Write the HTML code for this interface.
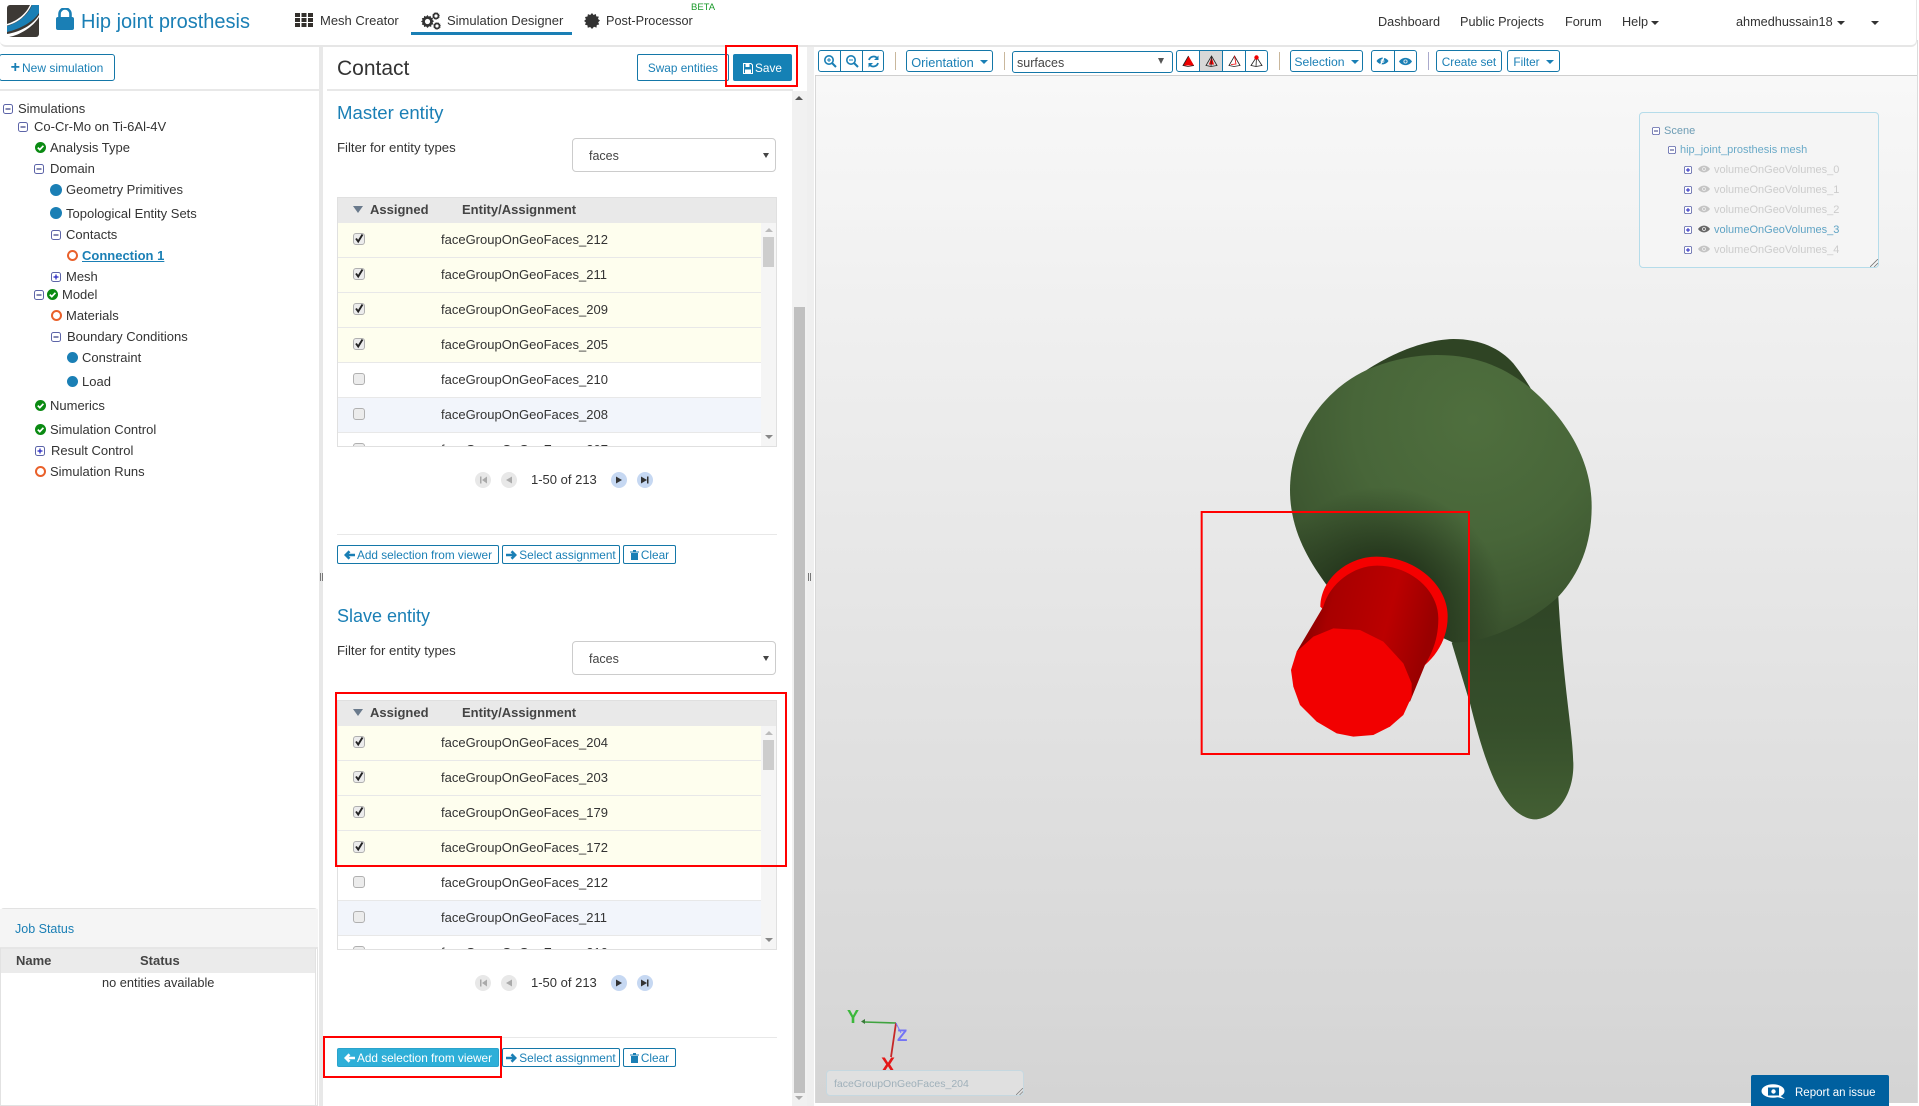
<!DOCTYPE html>
<html><head><meta charset="utf-8"><title>Contact</title>
<style>
html,body{margin:0;padding:0;background:#fff}
body{width:1919px;height:1106px;position:relative;overflow:hidden;font-family:"Liberation Sans",sans-serif;font-size:13px;color:#333}
.a{position:absolute}
.t{position:absolute;white-space:nowrap;line-height:0;transform:translateY(1px)}
.blue{color:#1a7fb5}
.btn{position:absolute;box-sizing:border-box;border:1px solid #1477a8;border-radius:2px;color:#1a7fb5;background:#fff;font-size:11.8px;white-space:nowrap;display:flex;align-items:center;justify-content:center;padding-top:1px}
.sel{position:absolute;left:572px;top:138px;width:204px;height:34px;box-sizing:border-box;border:1px solid #ccc;border-radius:4px;background:#fff}
.th{position:absolute;left:337px;top:197px;width:440px;height:26px;box-sizing:border-box;background:#e9e9e9;border:1px solid #e0e0e0;border-bottom:0}
.body{position:absolute;left:337px;top:223px;width:440px;height:224px;box-sizing:border-box;border:1px solid #e0e0e0;border-top:0;overflow:hidden;background:#fff}
.r{position:relative;width:423px;height:35px;box-sizing:border-box;border-bottom:1px solid #e8e8e8;background:#fff}
.r.y{background:#fefeee}
.r.b{background:#f2f5fb}
.r span{position:absolute;left:103px;top:17px;line-height:0;white-space:nowrap;font-size:13px;color:#333}
.cb{position:absolute;left:15px;top:10px;width:12px;height:12px;box-sizing:border-box;border:1px solid #b0b0b0;border-radius:3px;background:#ececec}
.cb svg{position:absolute;left:-1px;top:-2px}
.sb{position:absolute;left:423px;top:0;width:15px;height:223px;background:#f5f5f5}
.sb i{position:absolute;left:2px;top:14px;width:11px;height:30px;background:#cdcdcd}
.up{position:absolute;width:0;height:0;border-left:4px solid transparent;border-right:4px solid transparent;border-bottom:4px solid #bbb}
.dn{position:absolute;width:0;height:0;border-left:4px solid transparent;border-right:4px solid transparent;border-top:4px solid #888}
.pg{position:absolute;width:16px;height:16px;border-radius:50%;background:#e8e8e8}
.pg.on{background:#c6d8f2}
.hr{position:absolute;height:1px;background:#e8e8e8}
.rect{position:absolute;box-sizing:border-box;border:2px solid #f00;z-index:20}
.sep{position:absolute;width:1px;top:52px;height:18px;background:#c9b79c}
.tbar{position:absolute;box-sizing:border-box;border:1px solid #1477a8;border-radius:3px;background:#fff;top:50px;height:22px;display:flex;align-items:center;color:#1a7fb5;font-size:11.8px}
.tbar.tx{padding-top:2px}
.tbar b{font-weight:normal;display:flex;align-items:center;justify-content:center;height:100%;box-sizing:border-box;border-right:1px solid #1477a8}
.tbar b:last-child{border-right:0}
.car{display:inline-block;width:0;height:0;border-left:4px solid transparent;border-right:4px solid transparent;border-top:4px solid currentColor;margin-left:6px;vertical-align:middle}
.grip{position:absolute;top:573px;width:3px;height:8px;border-left:1px solid #777;border-right:1px solid #777;box-sizing:border-box}
</style></head>
<body>
<svg width="0" height="0" style="position:absolute">
<defs>
<symbol id="minus" viewBox="0 0 10 10"><rect x=".5" y=".5" width="9" height="9" rx="2" fill="#fff" stroke="#5c64a8"/><path d="M2.500 5H7.500" stroke="#333a80" stroke-width="1.200"/></symbol>
<symbol id="plus" viewBox="0 0 10 10"><rect x=".5" y=".5" width="9" height="9" rx="2" fill="#fff" stroke="#5c64a8"/><path d="M2.500 5H7.500M5 2.500V7.500" stroke="#2222c0" stroke-width="1.200"/></symbol>
<symbol id="ok" viewBox="0 0 11 11"><circle cx="5.500" cy="5.500" r="5.500" fill="#0a8a12"/><path d="M2.800 5.600L4.800 7.600L8.400 3.800" fill="none" stroke="#fff" stroke-width="1.700"/></symbol>
<symbol id="tick" viewBox="0 0 12 12"><path d="M3 6.500L5.200 9.500L9.500 2.500" fill="none" stroke="#222" stroke-width="1.900"/></symbol>
<symbol id="eye" viewBox="0 0 12 8"><path d="M0 4C3 -.5 9 -.5 12 4C9 8.500 3 8.500 0 4Z" fill="currentColor"/><circle cx="6" cy="4" r="1.900" fill="#f0f0f0"/><circle cx="6" cy="4" r="1.100" fill="currentColor"/></symbol>
<symbol id="gear" viewBox="0 0 16 16"><path d="M8 0L9.500 2L11.800 1L12.300 3.400L14.800 3.600L14 6L16 7.500L14.200 9.200L15.200 11.500L12.800 12L12.500 14.600L10 13.800L8 16L6.200 14L3.800 14.800L3.400 12.300L1 11.800L1.900 9.400L0 8L1.900 6.400L1 4L3.500 3.500L3.900 1.100L6.200 2Z" fill="#333"/></symbol>
<symbol id="gearh" viewBox="0 0 16 16"><path d="M8 0L9.500 2L11.800 1L12.300 3.400L14.800 3.600L14 6L16 7.500L14.200 9.200L15.200 11.500L12.800 12L12.500 14.600L10 13.800L8 16L6.200 14L3.800 14.800L3.400 12.300L1 11.800L1.900 9.400L0 8L1.900 6.400L1 4L3.500 3.500L3.900 1.100L6.200 2Z" fill="#333"/><circle cx="8" cy="8" r="3.200" fill="#fff"/></symbol>
</defs>
</svg>

<!-- header -->
<svg class="a" style="left:7px;top:5px" width="32" height="32" viewBox="0 0 32 32"><rect width="32" height="32" rx="3" fill="#3d3935"/><path d="M0 21C11 18 21 10 25 0H32V8C26 17 13 24 0 27Z" fill="#1a7fb5"/><path d="M0 29C13 27 26 20 32 10V12C26 22 13 30 2 32H0Z" fill="#fff"/><path d="M0 19C10 16 19 9 23 0H24.500C20 10 11 18 0 20.500Z" fill="#fff"/></svg>
<svg class="a" style="left:56px;top:8px" width="18" height="22" viewBox="0 0 18 22"><path d="M3.500 9V6a5.500 5.500 0 0 1 11 0V9" fill="none" stroke="#1a7fb5" stroke-width="2.600"/><rect x="0" y="9" width="18" height="13" rx="2" fill="#1a7fb5"/></svg>
<div class="t blue" style="left:81px;top:21px;font-size:20px">Hip joint prosthesis</div>
<svg class="a" style="left:295px;top:13px" width="18" height="14" viewBox="0 0 18 14"><g fill="#33302c"><rect x="0" y="0" width="5" height="4"/><rect x="6.500" y="0" width="5" height="4"/><rect x="13" y="0" width="5" height="4"/><rect x="0" y="5" width="5" height="4"/><rect x="6.500" y="5" width="5" height="4"/><rect x="13" y="5" width="5" height="4"/><rect x="0" y="10" width="5" height="4"/><rect x="6.500" y="10" width="5" height="4"/><rect x="13" y="10" width="5" height="4"/></g></svg>
<div class="t" style="left:320px;top:20px;font-size:13px">Mesh Creator</div>
<svg class="a" style="left:421px;top:15px" width="13" height="13"><use href="#gearh"/></svg>
<svg class="a" style="left:432px;top:12px" width="8" height="8"><use href="#gearh"/></svg>
<svg class="a" style="left:433px;top:22px" width="8" height="8"><use href="#gearh"/></svg>
<div class="t" style="left:447px;top:20px;font-size:13px">Simulation Designer</div>
<div class="a" style="left:411px;top:32px;width:161px;height:3px;background:#1a7fb5"></div>
<svg class="a" style="left:584px;top:13px" width="16" height="16"><use href="#gear"/></svg>
<div class="t" style="left:606px;top:20px;font-size:12.700px">Post-Processor</div>
<div class="t" style="left:691px;top:7px;font-size:9.500px;color:#1a9a2a">BETA</div>
<div class="t" style="left:1378px;top:21px;font-size:12.700px">Dashboard</div>
<div class="t" style="left:1460px;top:21px;font-size:12.700px">Public Projects</div>
<div class="t" style="left:1565px;top:21px;font-size:12.700px">Forum</div>
<div class="t" style="left:1622px;top:21px;font-size:12.700px">Help</div>
<div class="dn" style="left:1651px;top:21px;border-top-color:#333"></div>
<div class="t" style="left:1736px;top:21px;font-size:12.700px">ahmedhussain18</div>
<div class="dn" style="left:1837px;top:21px;border-top-color:#333"></div>
<div class="dn" style="left:1871px;top:21px;border-top-color:#333"></div>
<div class="a" style="left:0;top:0;width:1917px;height:47px;box-sizing:border-box;border-bottom:2px solid #e6e6e6;border-right:1px solid #e6e6e6;border-radius:0 0 6px 6px"></div>

<!-- left panel -->
<div class="btn" style="left:-1px;top:54px;width:116px;height:27px;font-size:12px;color:#1a7fb5;border-radius:3px;padding-top:0"><span style="font-weight:bold;font-size:16px;margin-right:2px">+</span>New simulation</div>
<div class="hr" style="left:0;top:89px;width:319px;height:2px"></div>
<div class="a" style="left:319px;top:47px;width:4px;height:1059px;background:#e8e8e8"></div>
<div class="grip" style="left:320px"></div>

<svg class="a" style="left:3px;top:104px" width="10" height="10"><use href="#minus"/></svg>
<div class="t" style="left:18px;top:108px">Simulations</div>
<svg class="a" style="left:18px;top:122px" width="10" height="10"><use href="#minus"/></svg>
<div class="t" style="left:34px;top:126px">Co-Cr-Mo on Ti-6Al-4V</div>
<svg class="a" style="left:35px;top:142px" width="11" height="11"><use href="#ok"/></svg>
<div class="t" style="left:50px;top:147px">Analysis Type</div>
<svg class="a" style="left:34px;top:164px" width="10" height="10"><use href="#minus"/></svg>
<div class="t" style="left:50px;top:168px">Domain</div>
<div class="a" style="left:50px;top:184px;width:12px;height:12px;border-radius:50%;background:#1a7fb5"></div>
<div class="t" style="left:66px;top:189px">Geometry Primitives</div>
<div class="a" style="left:50px;top:207px;width:12px;height:12px;border-radius:50%;background:#1a7fb5"></div>
<div class="t" style="left:66px;top:213px">Topological Entity Sets</div>
<svg class="a" style="left:51px;top:230px" width="10" height="10"><use href="#minus"/></svg>
<div class="t" style="left:66px;top:234px">Contacts</div>
<div class="a" style="left:67px;top:250px;width:11px;height:11px;box-sizing:border-box;border:2px solid #e9602a;border-radius:50%"></div>
<div class="t" style="left:82px;top:255px;font-weight:bold;color:#1a7fb5;text-decoration:underline">Connection 1</div>
<svg class="a" style="left:51px;top:272px" width="10" height="10"><use href="#plus"/></svg>
<div class="t" style="left:66px;top:276px">Mesh</div>
<svg class="a" style="left:34px;top:290px" width="10" height="10"><use href="#minus"/></svg>
<svg class="a" style="left:47px;top:289px" width="11" height="11"><use href="#ok"/></svg>
<div class="t" style="left:62px;top:294px">Model</div>
<div class="a" style="left:51px;top:310px;width:11px;height:11px;box-sizing:border-box;border:2px solid #e9602a;border-radius:50%"></div>
<div class="t" style="left:66px;top:315px">Materials</div>
<svg class="a" style="left:51px;top:332px" width="10" height="10"><use href="#minus"/></svg>
<div class="t" style="left:67px;top:336px">Boundary Conditions</div>
<div class="a" style="left:67px;top:352px;width:11px;height:11px;border-radius:50%;background:#1a7fb5"></div>
<div class="t" style="left:82px;top:357px">Constraint</div>
<div class="a" style="left:67px;top:376px;width:11px;height:11px;border-radius:50%;background:#1a7fb5"></div>
<div class="t" style="left:82px;top:381px">Load</div>
<svg class="a" style="left:35px;top:400px" width="11" height="11"><use href="#ok"/></svg>
<div class="t" style="left:50px;top:405px">Numerics</div>
<svg class="a" style="left:35px;top:424px" width="11" height="11"><use href="#ok"/></svg>
<div class="t" style="left:50px;top:429px">Simulation Control</div>
<svg class="a" style="left:35px;top:446px" width="10" height="10"><use href="#plus"/></svg>
<div class="t" style="left:51px;top:450px">Result Control</div>
<div class="a" style="left:35px;top:466px;width:11px;height:11px;box-sizing:border-box;border:2px solid #e9602a;border-radius:50%"></div>
<div class="t" style="left:50px;top:471px">Simulation Runs</div>

<!-- job status -->
<div class="a" style="left:0;top:908px;width:318px;height:198px;box-sizing:border-box;border:1px solid #e2e2e2;border-radius:4px 4px 0 0;background:#fff"></div>
<div class="a" style="left:0;top:909px;width:318px;height:38px;background:#f5f5f5;border-bottom:2px solid #e6e6e6"></div>
<div class="t blue" style="left:15px;top:928px;font-size:12.500px">Job Status</div>
<div class="a" style="left:1px;top:949px;width:314px;height:24px;background:#ebebeb"></div>
<div class="t" style="left:16px;top:960px;font-weight:bold;color:#444">Name</div>
<div class="t" style="left:140px;top:960px;font-weight:bold;color:#444">Status</div>
<div class="t" style="left:102px;top:982px;font-size:12.800px">no entities available</div>
<div class="a" style="left:315px;top:948px;width:1px;height:158px;background:#e2e2e2"></div>
<div class="a" style="left:0;top:948px;width:1px;height:158px;background:#e2e2e2"></div>
<div class="a" style="left:0;top:1105px;width:316px;height:1px;background:#e2e2e2"></div>

<!-- contact header -->
<div class="t" style="left:337px;top:68px;font-size:21px;color:#333">Contact</div>
<div class="btn" style="left:637px;top:54px;width:92px;height:27px">Swap entities</div>
<div class="btn" style="left:733px;top:54px;width:59px;height:27px;background:#1581b5;color:#fff;border-color:#1581b5">
<svg width="10" height="11" viewBox="0 0 10 11" style="margin-right:2px"><path d="M.5 .5H8L9.500 2V10.500H.5Z" fill="none" stroke="#fff"/><rect x="2.500" y="1" width="4" height="3" fill="#fff"/><rect x="2" y="6.500" width="6" height="3.500" fill="#fff"/></svg>Save</div>
<div class="rect" style="left:725px;top:45px;width:73px;height:42px"></div>
<div class="hr" style="left:327px;top:89px;width:466px;height:2px"></div>

<!-- scrollbars -->
<div class="a" style="left:792px;top:91px;width:15px;height:1015px;background:#f1f1f1"></div>
<div class="a" style="left:794px;top:307px;width:11px;height:786px;background:#c0c0c0"></div>
<div class="up" style="left:795px;top:96px;border-bottom-color:#555"></div>
<div class="dn" style="left:795px;top:1096px;border-top-color:#aaa"></div>
<div class="a" style="left:807px;top:47px;width:7px;height:1059px;background:#efefef"></div>
<div class="grip" style="left:808px"></div>

<!-- master section -->
<div class="t blue" style="left:337px;top:112px;font-size:18.600px">Master entity</div>
<div class="t" style="left:337px;top:147px;font-size:13.200px">Filter for entity types</div>
<div class="sel"></div>
<div class="t" style="left:589px;top:155px;font-size:12.500px;color:#444">faces</div>
<div class="dn" style="left:763px;top:153px;border-left-width:3px;border-right-width:3px;border-top:5px solid #444"></div>
<div class="th"></div>
<div class="dn" style="left:353px;top:206px;border-left-width:5px;border-right-width:5px;border-top:7px solid #6a7a8c"></div>
<div class="t" style="left:370px;top:209px;font-weight:bold;color:#444">Assigned</div>
<div class="t" style="left:462px;top:209px;font-weight:bold;color:#444">Entity/Assignment</div>
<div class="body">
<div class="r y"><div class="cb"><svg width="12" height="12"><use href="#tick"/></svg></div><span>faceGroupOnGeoFaces_212</span></div>
<div class="r y"><div class="cb"><svg width="12" height="12"><use href="#tick"/></svg></div><span>faceGroupOnGeoFaces_211</span></div>
<div class="r y"><div class="cb"><svg width="12" height="12"><use href="#tick"/></svg></div><span>faceGroupOnGeoFaces_209</span></div>
<div class="r y"><div class="cb"><svg width="12" height="12"><use href="#tick"/></svg></div><span>faceGroupOnGeoFaces_205</span></div>
<div class="r"><div class="cb"></div><span>faceGroupOnGeoFaces_210</span></div>
<div class="r b"><div class="cb"></div><span>faceGroupOnGeoFaces_208</span></div>
<div class="r"><div class="cb"></div><span>faceGroupOnGeoFaces_207</span></div>
<div class="sb"><i></i><div class="up" style="left:4px;top:5px"></div><div class="dn" style="left:4px;top:212px"></div></div>
</div>
<div class="pg" style="left:475px;top:472px"></div><div class="pg" style="left:501px;top:472px"></div><div class="pg on" style="left:611px;top:472px"></div><div class="pg on" style="left:637px;top:472px"></div>
<svg class="a" style="left:475px;top:472px" width="186" height="16" viewBox="0 0 186 16"><path d="M5 4.500H6.500V11.500H5ZM12 4.500V11.500L7 8Z" fill="#aaa"/><path d="M37 4.500V11.500L31 8Z" fill="#aaa"/><path d="M141 4.500V11.500L147 8Z" fill="#333"/><path d="M166 4.500V11.500L172 8ZM172 4.500H173.500V11.500H172Z" fill="#333"/></svg>
<div class="t" style="left:531px;top:479px;font-size:13px">1-50 of 213</div>
<div class="hr" style="left:337px;top:534px;width:440px"></div>
<div class="btn" style="left:337px;top:545px;width:162px;height:19px"><svg width="11" height="10" viewBox="0 0 12 10" style="margin-right:2px"><path d="M0 5L5 0L7 2L5.200 3.600H12V6.400H5.200L7 8L5 10Z" fill="#1a7fb5"/></svg>Add selection from viewer</div>
<div class="btn" style="left:502px;top:545px;width:118px;height:19px"><svg width="11" height="10" viewBox="0 0 12 10" style="margin-right:2px"><path d="M12 5L7 0L5 2L6.800 3.600H0V6.400H6.800L5 8L7 10Z" fill="#1a7fb5"/></svg>Select assignment</div>
<div class="btn" style="left:623px;top:545px;width:53px;height:19px"><svg width="9" height="10" viewBox="0 0 9 10" style="margin-right:2px"><path d="M0 1.500H9V2.500H0ZM3 0H6V1.500H3ZM1 3H8V10H1Z" fill="#1a7fb5"/></svg>Clear</div>

<!-- slave section -->
<div class="t blue" style="left:337px;top:615px;font-size:18px">Slave entity</div>
<div class="t" style="left:337px;top:650px;font-size:13.200px">Filter for entity types</div>
<div class="sel" style="top:641px"></div>
<div class="t" style="left:589px;top:658px;font-size:12.500px;color:#444">faces</div>
<div class="dn" style="left:763px;top:656px;border-left-width:3px;border-right-width:3px;border-top:5px solid #444"></div>
<div class="th" style="top:700px"></div>
<div class="dn" style="left:353px;top:709px;border-left-width:5px;border-right-width:5px;border-top:7px solid #6a7a8c"></div>
<div class="t" style="left:370px;top:712px;font-weight:bold;color:#444">Assigned</div>
<div class="t" style="left:462px;top:712px;font-weight:bold;color:#444">Entity/Assignment</div>
<div class="body" style="top:726px">
<div class="r y"><div class="cb"><svg width="12" height="12"><use href="#tick"/></svg></div><span>faceGroupOnGeoFaces_204</span></div>
<div class="r y"><div class="cb"><svg width="12" height="12"><use href="#tick"/></svg></div><span>faceGroupOnGeoFaces_203</span></div>
<div class="r y"><div class="cb"><svg width="12" height="12"><use href="#tick"/></svg></div><span>faceGroupOnGeoFaces_179</span></div>
<div class="r y"><div class="cb"><svg width="12" height="12"><use href="#tick"/></svg></div><span>faceGroupOnGeoFaces_172</span></div>
<div class="r"><div class="cb"></div><span>faceGroupOnGeoFaces_212</span></div>
<div class="r b"><div class="cb"></div><span>faceGroupOnGeoFaces_211</span></div>
<div class="r"><div class="cb"></div><span>faceGroupOnGeoFaces_210</span></div>
<div class="sb"><i></i><div class="up" style="left:4px;top:5px"></div><div class="dn" style="left:4px;top:212px"></div></div>
</div>
<div class="pg" style="left:475px;top:975px"></div><div class="pg" style="left:501px;top:975px"></div><div class="pg on" style="left:611px;top:975px"></div><div class="pg on" style="left:637px;top:975px"></div>
<svg class="a" style="left:475px;top:975px" width="186" height="16" viewBox="0 0 186 16"><path d="M5 4.500H6.500V11.500H5ZM12 4.500V11.500L7 8Z" fill="#aaa"/><path d="M37 4.500V11.500L31 8Z" fill="#aaa"/><path d="M141 4.500V11.500L147 8Z" fill="#333"/><path d="M166 4.500V11.500L172 8ZM172 4.500H173.500V11.500H172Z" fill="#333"/></svg>
<div class="t" style="left:531px;top:982px;font-size:13px">1-50 of 213</div>
<div class="hr" style="left:337px;top:1037px;width:440px"></div>
<div class="btn" style="left:337px;top:1048px;width:162px;height:19px;background:#2eafd8;color:#fff;border-color:#2aa3cc"><svg width="11" height="10" viewBox="0 0 12 10" style="margin-right:2px"><path d="M0 5L5 0L7 2L5.200 3.600H12V6.400H5.200L7 8L5 10Z" fill="#fff"/></svg>Add selection from viewer</div>
<div class="btn" style="left:502px;top:1048px;width:118px;height:19px"><svg width="11" height="10" viewBox="0 0 12 10" style="margin-right:2px"><path d="M12 5L7 0L5 2L6.800 3.600H0V6.400H6.800L5 8L7 10Z" fill="#1a7fb5"/></svg>Select assignment</div>
<div class="btn" style="left:623px;top:1048px;width:53px;height:19px"><svg width="9" height="10" viewBox="0 0 9 10" style="margin-right:2px"><path d="M0 1.500H9V2.500H0ZM3 0H6V1.500H3ZM1 3H8V10H1Z" fill="#1a7fb5"/></svg>Clear</div>
<div class="rect" style="left:335px;top:692px;width:452px;height:175px"></div>
<div class="rect" style="left:323px;top:1036px;width:179px;height:42px"></div>

<!-- toolbar -->
<div class="a" style="left:815px;top:47px;width:1102px;height:28px;background:#fff"></div>
<div class="tbar" style="left:818px;width:66px">
<b style="width:22px"><svg width="14" height="14" viewBox="0 0 14 14"><circle cx="6" cy="6" r="4.200" fill="none" stroke="#1a7fb5" stroke-width="1.600"/><path d="M9 9L13 13" stroke="#1a7fb5" stroke-width="2"/><path d="M4 6H8M6 4V8" stroke="#1a7fb5"/></svg></b>
<b style="width:22px"><svg width="14" height="14" viewBox="0 0 14 14"><circle cx="6" cy="6" r="4.200" fill="none" stroke="#1a7fb5" stroke-width="1.600"/><path d="M9 9L13 13" stroke="#1a7fb5" stroke-width="2"/><path d="M4 6H8" stroke="#1a7fb5"/></svg></b>
<b style="width:20px"><svg width="13" height="13" viewBox="0 0 13 13"><path d="M2 5A4.800 4.800 0 0 1 10.500 3.500M11 8A4.800 4.800 0 0 1 2.500 9.500" fill="none" stroke="#1a7fb5" stroke-width="1.800"/><path d="M11.500 .5V5H7ZM1.500 12.500V8H6Z" fill="#1a7fb5"/></svg></b>
</div>
<div class="sep" style="left:895px"></div>
<div class="tbar tx" style="left:906px;width:87px;justify-content:center;font-size:12.800px">Orientation<span class="car"></span></div>
<div class="sep" style="left:1004px"></div>
<div class="tbar tx" style="left:1012px;top:51px;width:161px;color:#444;font-size:12.500px;padding-left:4px">surfaces</div>
<div class="dn" style="left:1158px;top:58px;border-left-width:3px;border-right-width:3px;border-top:6px solid #555"></div>
<div class="tbar" style="left:1176px;width:92px">
<b style="width:23px"><svg width="13" height="12" viewBox="0 0 13 12"><path d="M6.500 1L12 10.500H1Z" fill="#e00"/><path d="M6.500 1L1 10.500L6 11.500L12 10.500" fill="none" stroke="#222" stroke-width=".8"/></svg></b>
<b style="width:23px;background:#d8d8d8"><svg width="13" height="12" viewBox="0 0 13 12"><path d="M6.500 2L9 9.500L4 9.500Z" fill="#e00"/><path d="M6.500 1L12 10.500L6 11.500L1 10.500ZM6.500 1L6 11.500" fill="none" stroke="#222" stroke-width=".8"/></svg></b>
<b style="width:23px"><svg width="13" height="12" viewBox="0 0 13 12"><path d="M6.500 1L12 10.500L6 11.500L1 10.500Z" fill="none" stroke="#222" stroke-width=".8"/><path d="M6.500 1L8 9L3 9.500" fill="none" stroke="#e00" stroke-width=".8"/></svg></b>
<b style="width:21px"><svg width="13" height="12" viewBox="0 0 13 12"><path d="M6.500 2L12 10.500L6 11.500L1 10.500ZM6.500 2L6 11.500" fill="none" stroke="#222" stroke-width=".8"/><circle cx="6.500" cy="2.500" r="2.200" fill="#e00"/></svg></b>
</div>
<div class="sep" style="left:1279px"></div>
<div class="tbar tx" style="left:1290px;width:73px;justify-content:center;font-size:12.200px">Selection<span class="car"></span></div>
<div class="tbar" style="left:1371px;width:46px">
<b style="width:23px"><svg width="13" height="10" viewBox="0 0 13 10" style="color:#1a7fb5"><use href="#eye" x="0" y="1" width="13" height="8"/><path d="M8.500 0L4 10" stroke="#fff" stroke-width="1.400"/></svg></b>
<b style="width:22px"><svg width="13" height="9" viewBox="0 0 12 8" style="color:#1a7fb5"><use href="#eye"/></svg></b>
</div>
<div class="sep" style="left:1428px;background:#aac"></div>
<div class="tbar tx" style="left:1436px;width:66px;justify-content:center">Create set</div>
<div class="tbar tx" style="left:1507px;width:53px;justify-content:center">Filter<span class="car"></span></div>
<div class="a" style="left:815px;top:75px;width:1102px;height:1px;background:#cfcfcf"></div>

<!-- viewer -->
<div class="a" style="left:815px;top:76px;width:1102px;height:1027px;background:linear-gradient(#f8f8f8,#d4d4d4);border-left:1px solid #d8d8d8;box-sizing:border-box"></div>
<div class="a" style="left:1917px;top:40px;width:1px;height:1063px;background:#dcdcdc"></div>

<svg class="a" style="left:1180px;top:320px;z-index:5" width="440" height="520" viewBox="0 0 1320 1560">
<defs>
<radialGradient id="ball" gradientUnits="userSpaceOnUse" cx="880" cy="300" r="800"><stop offset="0" stop-color="#4f6f3e"/><stop offset=".45" stop-color="#486639"/><stop offset=".72" stop-color="#3e5831"/><stop offset="1" stop-color="#2f4225"/></radialGradient>
<radialGradient id="neck" gradientUnits="userSpaceOnUse" cx="610" cy="860" r="360"><stop offset=".45" stop-color="#1f2f18" stop-opacity=".75"/><stop offset="1" stop-color="#1f2f18" stop-opacity="0"/></radialGradient>
<linearGradient id="leg" x1="0" y1="0" x2="0" y2="1"><stop offset="0" stop-color="#2f4526"/><stop offset=".6" stop-color="#364f2b"/><stop offset="1" stop-color="#435f33"/></linearGradient>
<linearGradient id="cyl" x1="0" y1="0" x2="1" y2=".25"><stop offset="0" stop-color="#6a0000"/><stop offset=".3" stop-color="#a80000"/><stop offset=".7" stop-color="#bb0000"/><stop offset="1" stop-color="#990000"/></linearGradient>
</defs>
<path d="M560 150C620 110 720 60 820 57C900 57 960 85 1000 130C1020 155 1040 185 1052 205L800 180Z" fill="#2f4424"/>
<path d="M815 968L870 1150C900 1270 935 1390 985 1450C1015 1488 1050 1500 1070 1498C1135 1490 1182 1420 1180 1330C1178 1230 1150 1100 1135 830L1000 900Z" fill="url(#leg)"/>
<path id="bp" d="M770 105C690 105 620 125 560 150C430 210 330 350 330 510C330 630 385 720 440 795L820 968C930 968 1060 900 1135 830C1200 760 1235 670 1235 560C1235 410 1150 290 1052 205C960 130 870 105 770 105Z" fill="url(#ball)"/>
<path d="M770 105C690 105 620 125 560 150C430 210 330 350 330 510C330 630 385 720 440 795L820 968C930 968 1060 900 1135 830C1200 760 1235 670 1235 560C1235 410 1150 290 1052 205C960 130 870 105 770 105Z" fill="url(#neck)"/>
<path d="M590 710C700 710 803 790 803 890C803 950 775 1000 735 1035L600 1050L421 860C421 780 500 710 590 710Z" fill="#f50000"/>
<path d="M592 737C690 737 775 810 775 895C775 960 755 1000 735 1035L690 1145L350 995L430 860C450 790 520 737 592 737Z" fill="url(#cyl)"/>
<path d="M333 1050L350 995L400 950L460 925L540 930L610 965L670 1030L695 1090L695 1130L670 1185L630 1220L580 1245L520 1250L470 1240L410 1205L360 1155L340 1100Z" fill="#f20000"/>
<rect x="65" y="576" width="802" height="726" fill="none" stroke="#f00" stroke-width="6"/>
</svg>

<!-- scene panel -->
<div class="a" style="left:1639px;top:112px;width:240px;height:156px;box-sizing:border-box;border:1px solid #b5dcea;border-radius:4px;background:#f5f5f5"></div>
<svg class="a" style="left:1870px;top:259px" width="8" height="8" viewBox="0 0 8 8"><path d="M0 8L8 0M4 8L8 4" stroke="#777" stroke-width=".8"/></svg>
<svg class="a" style="left:1652px;top:127px" width="8" height="8" viewBox="0 0 10 10"><use href="#minus"/></svg>
<div class="t" style="left:1664px;top:130px;font-size:11px;color:#6d9cb4">Scene</div>
<svg class="a" style="left:1668px;top:146px" width="8" height="8" viewBox="0 0 10 10"><use href="#minus"/></svg>
<div class="t" style="left:1680px;top:149px;font-size:11px;color:#6aaac8">hip_joint_prosthesis mesh</div>
<svg class="a" style="left:1684px;top:166px" width="8" height="8" viewBox="0 0 10 10"><use href="#plus"/></svg><svg class="a" style="left:1698px;top:165px;color:#c4c4c4" width="12" height="8"><use href="#eye"/></svg>
<div class="t" style="left:1714px;top:169px;font-size:11px;color:#ccc">volumeOnGeoVolumes_0</div>
<svg class="a" style="left:1684px;top:186px" width="8" height="8" viewBox="0 0 10 10"><use href="#plus"/></svg><svg class="a" style="left:1698px;top:185px;color:#c4c4c4" width="12" height="8"><use href="#eye"/></svg>
<div class="t" style="left:1714px;top:189px;font-size:11px;color:#ccc">volumeOnGeoVolumes_1</div>
<svg class="a" style="left:1684px;top:206px" width="8" height="8" viewBox="0 0 10 10"><use href="#plus"/></svg><svg class="a" style="left:1698px;top:205px;color:#c4c4c4" width="12" height="8"><use href="#eye"/></svg>
<div class="t" style="left:1714px;top:209px;font-size:11px;color:#ccc">volumeOnGeoVolumes_2</div>
<svg class="a" style="left:1684px;top:226px" width="8" height="8" viewBox="0 0 10 10"><use href="#plus"/></svg><svg class="a" style="left:1698px;top:225px;color:#666" width="12" height="8"><use href="#eye"/></svg>
<div class="t" style="left:1714px;top:229px;font-size:11px;color:#5fa3c4">volumeOnGeoVolumes_3</div>
<svg class="a" style="left:1684px;top:246px" width="8" height="8" viewBox="0 0 10 10"><use href="#plus"/></svg><svg class="a" style="left:1698px;top:245px;color:#c4c4c4" width="12" height="8"><use href="#eye"/></svg>
<div class="t" style="left:1714px;top:249px;font-size:11px;color:#ccc">volumeOnGeoVolumes_4</div>

<!-- axes -->
<svg class="a" style="left:840px;top:1005px" width="70" height="70" viewBox="0 0 70 70">
<path d="M56 18L24 17" stroke="#3fa33f" stroke-width="1.600"/><path d="M21 16.500L25 14V19Z" fill="#3a7a3a"/>
<path d="M56 18L51 52" stroke="#c62828" stroke-width="1.800"/>
<path d="M56 18L61 28" stroke="#7a7aff" stroke-width="1"/>
</svg>
<div class="t" style="left:847px;top:1016px;font:bold 18px 'Liberation Sans',sans-serif;line-height:0;color:#3cb83c">Y</div>
<div class="t" style="left:897px;top:1035px;font:bold 17px 'Liberation Sans',sans-serif;line-height:0;color:#7474f5">Z</div>
<div class="t" style="left:881px;top:1065px;font:bold 21px 'Liberation Sans',sans-serif;line-height:0;color:#e41818">X</div>

<div class="a" style="left:826px;top:1070px;width:198px;height:26px;box-sizing:border-box;border:1px solid #c6d8e0;border-radius:4px;background:#e0e0e0"></div>
<div class="t" style="left:834px;top:1083px;font-size:10.500px;color:#9fb0ba">faceGroupOnGeoFaces_204</div>
<svg class="a" style="left:1016px;top:1088px" width="7" height="7" viewBox="0 0 8 8"><path d="M0 8L8 0M4 8L8 4" stroke="#777" stroke-width=".8"/></svg>

<!-- report -->
<div class="a" style="left:1751px;top:1075px;width:138px;height:31px;background:#00609f;border-radius:2px 2px 0 0;z-index:6"></div>
<svg class="a" style="left:1761px;top:1084px;z-index:7" width="25" height="15" viewBox="0 0 25 15"><ellipse cx="12" cy="7" rx="11.500" ry="6.800" fill="#fff"/><path d="M18 11L24 15L16 13Z" fill="#fff"/><rect x="7" y="3.500" width="11" height="8" fill="#00609f"/><circle cx="12.500" cy="7.500" r="2.200" fill="#fff"/></svg>
<div class="t" style="left:1795px;top:1092px;font-size:11.500px;color:#fff;z-index:7">Report an issue</div>
</body></html>
